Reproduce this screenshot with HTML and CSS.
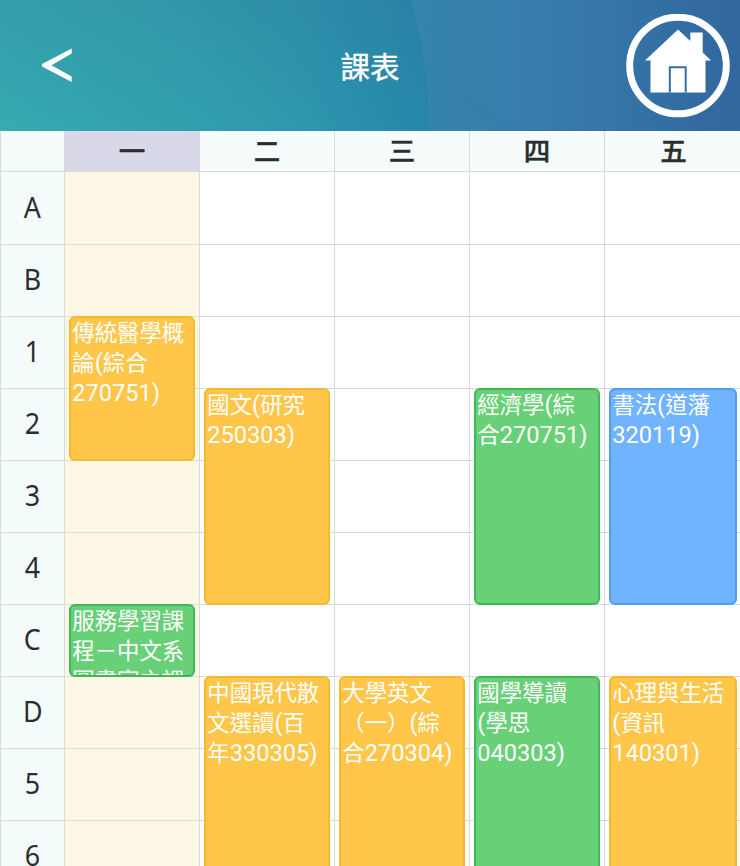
FILE: index.html
```html
<!DOCTYPE html>
<html lang="zh-Hant">
<head>
<meta charset="utf-8">
<title>課表</title>
<link rel="stylesheet" href="styles.css">
</head>
<body>
<header class="bar">
  <svg class="bar-art" viewBox="0 0 740 131" preserveAspectRatio="none" aria-hidden="true">
    <defs>
      <linearGradient id="wave" x1="0" y1="0" x2="1" y2="0">
        <stop offset="0" stop-color="#3585ad"/>
        <stop offset="0.45" stop-color="#367aaa"/>
        <stop offset="1" stop-color="#32679f"/>
      </linearGradient>
      <pattern id="dots" width="5" height="5" patternUnits="userSpaceOnUse">
        <circle cx="1.500" cy="1.500" r="1" fill="#2a6c9f"/>
        <circle cx="4" cy="4" r="1" fill="#2a6c9f"/>
      </pattern>
    </defs>
    <path d="M411 0H740V131H430C429 85 422 40 411 0Z" fill="url(#wave)"/>
    <path d="M416 0C430 50 470 100 520 131H495C460 105 430 65 416 0Z" fill="url(#dots)" opacity=".3"/>
  </svg>
  <a class="back" href="#" aria-label="返回">
    <svg width="32" height="36" viewBox="0 0 32 36"><path d="M30.700 0.500V5.500L10.500 17.200L30.700 28.500V34L1 18.400V15.900Z" fill="#fff"/></svg>
  </a>
  <h1 class="title">課表</h1>
  <a class="home" href="#" aria-label="首頁">
    <svg width="104" height="104" viewBox="0 0 104 104">
      <circle cx="52" cy="51.500" r="48.300" fill="none" stroke="#fff" stroke-width="7"/>
      <path d="M52 15.500L64.300 27V18.500H76.700V38.500L85 46.500H79.500V78.500H24.500V46.500H19Z" fill="#fff"/>
      <path d="M43.800 78.500V53.300H59.700V78.500" fill="none" stroke="#356fa5" stroke-width="2"/>
    </svg>
  </a>
</header>
<main class="grid" id="grid">
</main>
<script src="app.js"></script>
</body>
</html>
```
FILE: styles.css
```css
* { box-sizing: border-box; }
body {
  margin: 0;
  height: 866px;
  overflow: hidden;
  background: #fff;
  font-family: "Noto Sans", "Noto Sans CJK TC", sans-serif;
  color: #2b2d2f;
}
.bar {
  position: relative;
  height: 131px;
  display: grid;
  grid-template-columns: 1fr auto 1fr;
  align-items: center;
  padding: 0 10px 0 41px;
  background:
    linear-gradient(180deg, rgba(50, 110, 145, .2) 0%, rgba(50, 110, 145, 0) 100%),
    linear-gradient(80deg, #36abb1 0%, #31a0ae 25%, #2e97ae 40%, #2686aa 57%, #2c74a5 100%);
}
.bar-art { position: absolute; inset: 0; width: 100%; height: 100%; }
.back, .title, .home { position: relative; }
.back svg, .home svg { display: block; }
.title {
  margin: 0 0 2px -31px;
  font: 400 29.5px/40px "Noto Sans CJK TC", sans-serif;
  -webkit-text-stroke: .4px #fff;
  color: #fff;
}
.home { justify-self: end; }
.grid {
  display: grid;
  grid-template-columns: 65px repeat(5, 135px);
  grid-template-rows: 41px 73px repeat(9, 72px);
}
.cell {
  border-right: 1px solid #d9dbdb;
  border-bottom: 1px solid #d9dbdb;
}
.cell.last { border-right: 0; }
.head {
  background: #f5fcfb;
  text-align: center;
  font: 500 26.5px/38px "Noto Sans CJK TC", sans-serif;
  -webkit-text-stroke: .4px #2b2d2f;
}
.head.last { padding-left: 2px; }
.label {
  background: #f3fcfb;
  border-left: 1px solid #d9dbdb;
  display: flex;
  align-items: center;
  justify-content: center;
  font-size: 29.5px;
  padding-bottom: 4px;
}
.label span { transform: scaleX(.91); }
.today { background: #fdf7e5; }
.head.today { background: #d8d8e9; border-color: #d8d8e9 #d8d8e9 #d9dbdb; }
.event {
  margin: -1px 5px 0 4px;
  overflow: hidden;
  border: 2px solid;
  border-radius: 6px;
  padding: 0 1.3px;
  color: #fff;
  font: 400 22.4px/30px "Noto Sans CJK TC", sans-serif;
}
.event.end { margin-right: 3px; }
.text { margin-top: -2px; }
.line { display: block; height: 30px; white-space: nowrap; }
.num { font-family: Roboto, sans-serif; font-size: 23.6px; }
.orange { background: #ffc64a; border-color: #f5b930; }
.green { background: #68d077; border-color: #3fb858; }
.blue { background: #70b3ff; border-color: #4f9cf0; }
```
FILE: app.js
```js
const days = ["一", "二", "三", "四", "五"];
const periods = ["A", "B", "1", "2", "3", "4", "C", "D", "5", "6"];
// day, first period, number of periods, colour, lines
const events = [
  [0, 2, 2, "orange", ["傳統醫學概", "論(綜合", "270751)"]],
  [0, 6, 1, "green", ["服務學習課", "程－中文系", "圖書室之課"]],
  [1, 3, 3, "orange", ["國文(研究", "250303)"]],
  [3, 3, 3, "green", ["經濟學(綜", "合270751)"]],
  [4, 3, 3, "blue", ["書法(道藩", "320119)"]],
  [1, 7, 3, "orange", ["中國現代散", "文選讀(百", "年330305)"]],
  [2, 7, 3, "orange", ["大學英文", "（一）(綜", "合270304)"]],
  [3, 7, 3, "green", ["國學導讀", "(學思", "040303)"]],
  [4, 7, 3, "orange", ["心理與生活", "(資訊", "140301)"]]
];
const grid = document.getElementById("grid");
function add(cls, html, row, col, span = 1) {
  const el = document.createElement("div");
  el.className = cls;
  el.innerHTML = html;
  el.style.gridArea = `${row} / ${col} / span ${span} / span 1`;
  grid.append(el);
}
add("cell label", "", 1, 1);
days.forEach((d, i) => add("cell head" + (i === 0 ? " today" : "") + (i === 4 ? " last" : ""), d, 1, i + 2));
periods.forEach((p, r) => {
  add("cell label", `<span>${p}</span>`, r + 2, 1);
  days.forEach((_, i) => add("cell" + (i === 0 ? " today" : "") + (i === 4 ? " last" : ""), "", r + 2, i + 2));
});
events.forEach(([day, start, span, color, lines]) => {
  const html = lines.map(t => `<span class="line">${t.replace(/[()0-9]+/g, '<span class="num">$&</span>')}</span>`).join("");
  add(`event ${color}${day === 4 ? " end" : ""}`, `<div class="text">${html}</div>`, start + 2, day + 2, span);
});
```
